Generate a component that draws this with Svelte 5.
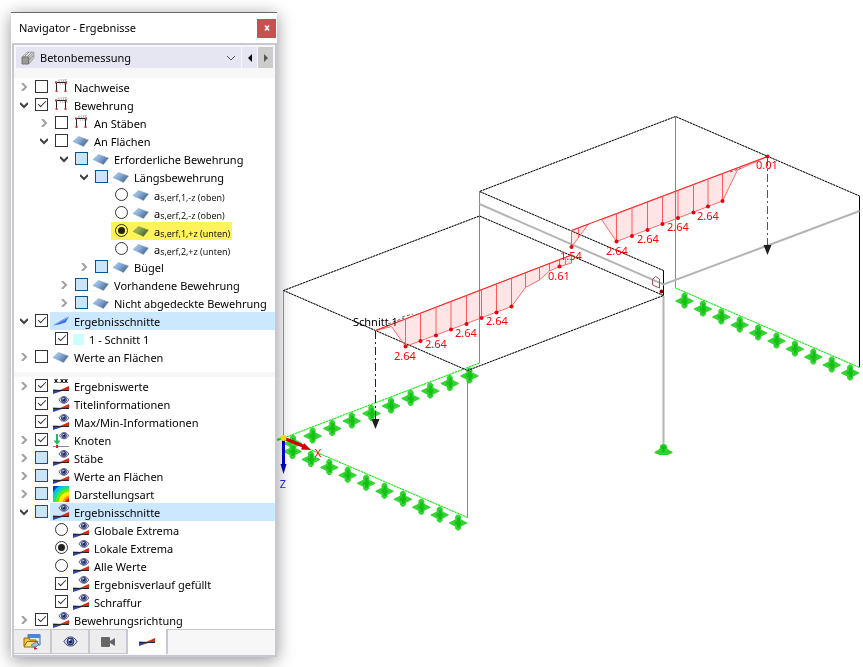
<script lang="ts">
	type Row = {
		level: number;
		text: string;
		icon: string;
		arrow?: 'open' | 'closed';
		kind?: 'checkbox' | 'radio';
		group?: string;
		checked?: boolean;
		mixed?: boolean;
		selected?: boolean;
		marked?: boolean;
		sub?: string;
	};

	const results: Row[] = [
		{ level: 0, text: 'Nachweise', icon: 'frame', arrow: 'closed' },
		{ level: 0, text: 'Bewehrung', icon: 'frame', arrow: 'open', checked: true },
		{ level: 1, text: 'An Stäben', icon: 'frame', arrow: 'closed' },
		{ level: 1, text: 'An Flächen', icon: 'surface', arrow: 'open' },
		{ level: 2, text: 'Erforderliche Bewehrung', icon: 'surface', arrow: 'open', mixed: true },
		{ level: 3, text: 'Längsbewehrung', icon: 'surface', arrow: 'open', mixed: true },
		{ level: 4, text: 'a', sub: 's,erf,1,-z (oben)', icon: 'surface', kind: 'radio', group: 'as' },
		{ level: 4, text: 'a', sub: 's,erf,2,-z (oben)', icon: 'surface', kind: 'radio', group: 'as' },
		{ level: 4, text: 'a', sub: 's,erf,1,+z (unten)', icon: 'surface', kind: 'radio', group: 'as', checked: true, marked: true },
		{ level: 4, text: 'a', sub: 's,erf,2,+z (unten)', icon: 'surface', kind: 'radio', group: 'as' },
		{ level: 3, text: 'Bügel', icon: 'surface', arrow: 'closed', mixed: true },
		{ level: 2, text: 'Vorhandene Bewehrung', icon: 'surface', arrow: 'closed', mixed: true },
		{ level: 2, text: 'Nicht abgedeckte Bewehrung', icon: 'surface', arrow: 'closed', mixed: true },
		{ level: 0, text: 'Ergebnisschnitte', icon: 'section', arrow: 'open', checked: true, selected: true },
		{ level: 1, text: '1 - Schnitt 1', icon: 'swatch', checked: true },
		{ level: 0, text: 'Werte an Flächen', icon: 'surface', arrow: 'closed' }
	];

	const display: Row[] = [
		{ level: 0, text: 'Ergebniswerte', icon: 'values', arrow: 'closed', checked: true },
		{ level: 0, text: 'Titelinformationen', icon: 'eye', checked: true },
		{ level: 0, text: 'Max/Min-Informationen', icon: 'eye', checked: true },
		{ level: 0, text: 'Knoten', icon: 'node', arrow: 'closed', checked: true },
		{ level: 0, text: 'Stäbe', icon: 'eye', arrow: 'closed', mixed: true },
		{ level: 0, text: 'Werte an Flächen', icon: 'eye', arrow: 'closed', mixed: true },
		{ level: 0, text: 'Darstellungsart', icon: 'contour', arrow: 'closed', mixed: true },
		{ level: 0, text: 'Ergebnisschnitte', icon: 'eye', arrow: 'open', mixed: true, selected: true },
		{ level: 1, text: 'Globale Extrema', icon: 'eye', kind: 'radio', group: 'extrema' },
		{ level: 1, text: 'Lokale Extrema', icon: 'eye', kind: 'radio', group: 'extrema', checked: true },
		{ level: 1, text: 'Alle Werte', icon: 'eye', kind: 'radio', group: 'extrema' },
		{ level: 1, text: 'Ergebnisverlauf gefüllt', icon: 'eye', checked: true },
		{ level: 1, text: 'Schraffur', icon: 'eye', checked: true },
		{ level: 0, text: 'Bewehrungsrichtung', icon: 'eye', arrow: 'closed', checked: true }
	];

	const steps = Array.from({ length: 10 }, (_, i) => i);
	const supports = [
		...steps.map((i) => [293 + 19.6 * i, 443 - 7.5 * i]),
		...steps.map((i) => [292.5 + 18.4 * i, 451 + 7.95 * i]),
		...steps.map((i) => [684.5 + 18.4 * i, 300.5 + 8 * i])
	];

	const edges = [
		'M283.5 290.5L479.5 216L663.5 295.5L467.5 370.5Z',
		'M663.5 270.5L479.5 191.5L675.5 116.5L859.5 196'
	];
	const greenEdges = ['M467.5 517.5L283.5 438L479.5 363', 'M675.5 288L859.5 367.5'];

	// hatch lines of the result diagrams: x, y on the section, y of the value
	const hatch = [
		[405.5, 319, 346.5], [420.5, 313, 341], [436, 307, 335.5], [451, 301.5, 329.5],
		[466.5, 295.5, 324], [481.5, 290, 318], [496.5, 284, 312.5], [511.5, 278, 306.5],
		[525.5, 273, 287.5], [539.5, 267.5, 280], [549.5, 264, 271], [559.5, 260, 266.5],
		[565.5, 257.5, 265], [571.5, 255, 263],
		[571.5, 230.5, 247], [578.5, 228, 238],
		[616.5, 213.5, 241.5], [632, 207.5, 236], [647.5, 202, 230], [662.5, 196, 224],
		[678, 190.5, 218], [693.5, 184.5, 212.5], [708, 179, 206.5], [722.5, 173.5, 201]
	];
	const dots = [
		...hatch.slice(0, 8), hatch[11], hatch[14], ...hatch.slice(16), [767.5, 156.5, 156.5]
	];
	const values: [string, number, number][] = [
		['2.64', 405, 360], ['2.64', 436, 348], ['2.64', 466, 337], ['2.64', 497, 325],
		['0.61', 559, 280], ['1.54', 571, 260], ['2.64', 617, 255], ['2.64', 648, 243],
		['2.64', 678, 231], ['2.64', 708, 220], ['0.01', 767, 169]
	];
</script>

{#snippet wedge()}
	<path d="M0 11.5L9 12V13L0 16Z" fill="#2446b8" />
	<path d="M7 12L16 8V13H7Z" fill="#d42c14" />
	<path d="M0 12.5H16" stroke="#2a2030" />
{/snippet}

{#snippet eye()}
	<path d="M0 4.5C2 1 4.500 0 6.500 0S11 1 13 4.500C11 8 9 9 6.500 9S2 8 0 4.500Z" fill="#e0e2f0" stroke="#2c2f5e" />
	<circle cx="6.500" cy="4.500" r="3.400" fill="#5b6fae" stroke="#252a60" />
	<circle cx="6.500" cy="4.500" r="1.500" fill="#111840" />
	<circle cx="5.500" cy="3" r="1" fill="#dbe6ff" />
{/snippet}

{#snippet icon(name: string)}
	{#if name === 'swatch'}
		<span class="swatch"></span>
	{:else}
		<svg class="icon" class:loose={name === 'values'} width="16" height="16" viewBox="0 0 16 16" aria-hidden="true">
			{#if name === 'frame'}
				<path d="M6 1l2 5M8 1l2 5M10 0l2 6M12 0l2 6M7 4a2 2 0 1 1 2-3M12 4a2 2 0 1 1 2-3" fill="none" stroke="#aaa" stroke-width=".7" />
				<path d="M3.500 3V12M12.500 3V12M3 3.500H13" fill="none" stroke="#222" />
				<path d="M2 2.500h2v2H2zM12 2.500h2v2h-2zM2.500 11h2v2h-2zM11.500 11h2v2h-2z" fill="#c8303c" />
			{:else if name === 'surface'}
				<path d="M0 8.500L5.500 3.500L15.500 7L10.500 13.500Z" fill="url(#surface)" stroke="#7c9cc4" stroke-width=".5" />
			{:else if name === 'section'}
				<path d="M0 12.500L8 7.500L16 3.500L12.500 9.500L6 11.500Z" fill="#3f6fe0" />
				<path d="M1 12L16 4" stroke="#8fb2f8" stroke-width=".8" />
			{:else if name === 'contour'}
				<rect width="16" height="16" fill="#0a3cc0" />
				<circle cx="17" cy="17" r="20" fill="#00c4ee" />
				<circle cx="17" cy="17" r="17" fill="#12e0a0" />
				<circle cx="17" cy="17" r="14.500" fill="#6fe800" />
				<circle cx="17" cy="17" r="11.500" fill="#ffee00" />
				<circle cx="17" cy="17" r="7.500" fill="#ff9800" />
				<circle cx="17" cy="17" r="5" fill="#e02000" />
			{:else if name === 'node'}
				<path d="M4 2V10" stroke="#27b860" stroke-width="2" />
				<path d="M0.500 8.500H7.500L4 13Z" fill="#27b860" />
				<path d="M0 14.500H16" stroke="#888" />
				<path d="M3 13h2v3H3z" fill="#e02020" />
				<g transform="translate(6.500 0.500) scale(.7)">{@render eye()}</g>
			{:else}
				{@render wedge()}
				{#if name === 'values'}
					<text x="8" y="5" text-anchor="middle" font-size="7" font-weight="700">x.xx</text>
				{:else if name === 'eye'}
					<g transform="translate(6 0.500) scale(.75)">{@render eye()}</g>
				{/if}
			{/if}
		</svg>
	{/if}
{/snippet}

{#snippet tree(rows: Row[])}
	<ul>
		{#each rows as row}
			<li style="--level: {row.level}">
				{#if row.arrow}
					<button class="toggle" class:open={row.arrow === 'open'} aria-label={row.text}>
						<svg width="8" height="8" viewBox="0 0 8 8">
							{#if row.arrow === 'open'}
								<path d="M0 2L4 6L8 2" />
							{:else}
								<path d="M2 0L6 4L2 8" />
							{/if}
						</svg>
					</button>
				{:else}
					<span class="toggle"></span>
				{/if}
				<label class:marked={row.marked}>
					<input
						type={row.kind ?? 'checkbox'}
						name={row.group}
						checked={row.checked}
						class:mixed={row.mixed}
					/>
					<span class="caption" class:selected={row.selected}>
						{@render icon(row.icon)}
						<span class="text">{row.text}{#if row.sub}<sub>{row.sub}</sub>{/if}</span>
					</span>
				</label>
			</li>
		{/each}
	</ul>
{/snippet}

<svg class="defs" width="0" height="0" aria-hidden="true">
	<linearGradient id="surface" x1="0" y1="0" x2="1" y2="0.600">
		<stop offset="0" stop-color="#b4d8f8" />
		<stop offset="0.500" stop-color="#86aad4" />
		<stop offset="1" stop-color="#47668f" />
	</linearGradient>
</svg>

<main>
	<aside>
		<header>
			<h1>Navigator - Ergebnisse</h1>
			<button class="close" aria-label="Schließen">
				<svg width="6" height="6" viewBox="0 0 6 6"><path d="M1 0.500L5 5.500M5 0.500L1 5.500" /></svg>
			</button>
		</header>

		<div class="body">
			<div class="toolbar">
				<div class="combo">
					<svg class="cube" width="14" height="14" viewBox="0 0 14 14" aria-hidden="true">
						<path d="M1 6L6 1H13L8 6Z" fill="#ddd" stroke="#999" stroke-width=".7" />
						<path d="M8 6L13 1V7L8 13Z" fill="#c4c4c4" stroke="#999" stroke-width=".7" />
						<path d="M1 6H7.500V13H1Z" fill="#999" stroke="#777" />
						<path d="M3 6l5-5M6 6l5-5M8 9l5-5" stroke="#888" stroke-width=".8" />
					</svg>
					<select aria-label="Bemessung">
						<option>Betonbemessung</option>
					</select>
					<svg class="drop" width="10" height="6" viewBox="0 0 10 6" aria-hidden="true">
						<path d="M1 1L5 5L9 1" fill="none" stroke="#555" />
					</svg>
				</div>
				<button class="step" aria-label="Zurück">
					<svg width="4" height="8" viewBox="0 0 4 8"><path d="M4 0V8L0 4Z" fill="#000" /></svg>
				</button>
				<button class="step next" aria-label="Weiter">
					<svg width="4" height="8" viewBox="0 0 4 8"><path d="M0 0V8L4 4Z" fill="#555" /></svg>
				</button>
			</div>

			<div class="results">{@render tree(results)}</div>
			{@render tree(display)}

			<nav>
				<button aria-label="Daten">
					<svg width="18" height="18" viewBox="0 0 18 18">
						<path d="M5 1.500H17V12H5Z" fill="#dbe9fa" stroke="#3869b8" />
						<path d="M5 1H17V5H5Z" fill="#4b86da" />
						<path d="M1 5H6L7 7H13V13H1Z" fill="#f3c53a" stroke="#9a6a10" />
						<path d="M4 8.500H15L12 14H1Z" fill="#ffe27a" stroke="#9a6a10" />
						<path d="M8 12L13 9L16 11L12 15Z" fill="#8fc4ee" stroke="#456" stroke-width=".6" />
						<path d="M12 13V17M11 15.500h3" stroke="#c22" />
					</svg>
				</button>
				<button aria-label="Anzeigen">
					<svg class="loose" width="13" height="9" viewBox="0 0 13 9">{@render eye()}</svg>
				</button>
				<button aria-label="Ansichten">
					<svg width="14" height="10" viewBox="0 0 14 10">
						<path d="M0 1a1 1 0 0 1 1-1H8a1 1 0 0 1 1 1V9a1 1 0 0 1-1 1H1a1 1 0 0 1-1-1ZM9 4L14 1V9L9 6Z" fill="#666" />
					</svg>
				</button>
				<button class="active" aria-label="Ergebnisse">
					<svg width="16" height="9" viewBox="0 7 16 9">{@render wedge()}</svg>
				</button>
			</nav>
		</div>
	</aside>

	<svg class="scene" viewBox="277 0 586 667" role="img" aria-label="Modell mit Ergebnisschnitt">
		<defs>
			<g id="foot">
				<path d="M-3 -5L-1 -6H1L3 -5L4 -1L9 2V3L4 5H-4L-9 3V2L-4 -1Z" fill="#2bd32b" />
				<path d="M-2 -4H2V-1H-2ZM-1 -1H1V2H-1Z" fill="#10b810" />
			</g>
			<g id="support">
				<path d="M-3 -6L-1 -8H1L3 -6V-3L5 -2L9 0V1L5 3L3 4V6L1 8H-1L-3 6V4L-5 3L-9 1V0L-5 -2L-3 -3Z" fill="#35d435" />
				<path d="M-1 -5H2V-1H3V2H2V5H-1V2H-3V-1H-1Z" fill="#14c014" />
			</g>
		</defs>

		<g fill="none" stroke="#8a8a8a">
			<path d="M283.500 290.500V438M467.500 370.500V517.500M479.500 191.500V363M675.500 116.500V288" />
			<path d="M859.500 196V367.500M663.500 270.500V295.500" stroke="#000" />
			<path d="M479.500 204L663.500 284.500L859.500 211M663.500 296V446" stroke="#b4b4b4" stroke-width="2" />
		</g>

		{#each greenEdges as d}
			<path {d} fill="none" stroke="#a0ffa0" />
			<path {d} fill="none" stroke="#00e800" stroke-dasharray="2 1" />
		{/each}
		{#each supports as [x, y]}
			<use href="#support" {x} {y} />
		{/each}
		<use href="#foot" x="663.500" y="450" />

		{#each edges as d}
			<path {d} fill="none" stroke="#aaa" />
			<path {d} fill="none" stroke="#000" stroke-dasharray="2 1" />
		{/each}

		<g fill="#f00" fill-opacity=".1" stroke="#ff6a6a">
			<path d="M375.500 330.500L391.500 326.500L405.500 346.500L511.500 306.500L525.500 287.500L539.500 280L549.500 271L559.500 266.500L571.500 263V255Z" />
			<path d="M571.500 230.500V247L588.500 224Z" />
			<path d="M601.500 219.500L616.500 241.500L722.500 201L737.500 170L767.500 156.500Z" />
		</g>
		<path d="M375.500 330.500L571.500 255M571.500 247V230.500L767.500 156.500" fill="none" stroke="#f22" />
		{#each hatch as [x, top, bottom]}
			<path d="M{x} {top}V{bottom}" stroke="#ff5a5a" />
		{/each}
		{#each dots as [x, , y]}
			<circle cx={x} cy={y} r="2" fill="#e8000c" />
		{/each}

		<g stroke="#222" stroke-dasharray="8 3 2 3">
			<path d="M375.500 331V420" />
			<path d="M767.500 158V246" stroke="#555" />
		</g>
		<path d="M371.500 419H379.500L375.500 429ZM763.500 245H771.500L767.500 255Z" fill="#1a221a" />
		<path d="M388 324L404 318M402 317L413 314M730 172L741 168" stroke="#666" stroke-dasharray="3 2" />
		<path d="M652.500 279.500L655.500 276.500L659.500 279V288L652.500 285Z" fill="none" stroke="#a05050" />
		<circle cx="661.500" cy="291.500" r="2" fill="#900" />

		<path d="M277 440L283 438" stroke="#0c0" stroke-width="2" />
		<path d="M283.500 438V465" stroke="#0000b8" stroke-width="3" />
		<path d="M280.500 464H286.500L283.500 474Z" fill="#0000b8" />
		<path d="M283.500 438L303 446" stroke="#d00000" stroke-width="3" />
		<path d="M304 443L311 450L301 449.500Z" fill="#d00000" />
		<circle cx="283.500" cy="438" r="3" fill="#e8e000" />

		<g class="values">
			{#each values as [value, x, y]}
				<text {x} {y}>{value}</text>
			{/each}
			<text x="318" y="457">X</text>
			<text class="z" x="283" y="488">Z</text>
		</g>
		<text x="353" y="326">Schnitt 1</text>
	</svg>
</main>

<style>
	:global(body) {
		margin: 0;
		background: #fff;
	}

	main {
		display: flex;
		align-items: flex-start;
		overflow: hidden;

		font: 11px/18px 'Noto Sans', 'Open Sans', sans-serif;
		color: #000;
	}

	.defs {
		position: absolute;
	}

	aside {
		flex: none;
		box-sizing: border-box;
		width: 266px;
		margin: 12px 0 10px 11px;

		border-top: 1px solid #6a6a6a;
		background: #fff;
		box-shadow: 0 3px 16px rgba(0, 0, 0, 0.42);
	}

	header {
		display: flex;
		align-items: center;
		justify-content: space-between;
		height: 30px;
		padding: 0 1px 0 8px;
	}

	h1 {
		margin: 0;
		font-size: 11px;
		font-weight: 400;
	}

	button {
		display: flex;
		align-items: center;
		justify-content: center;
		margin: 0;
		padding: 0;
		border: none;
		background: none;
	}

	.close {
		width: 19px;
		height: 19px;
		background: #c75050;
	}

	.close path {
		stroke: #fff;
		stroke-width: 1.5;
	}

	.body {
		margin-left: 1px;
		border: 2px solid #c8c8d3;
		background: #f7f7f7;
	}

	.toolbar {
		display: flex;
		gap: 1px;
		padding: 2px 2px 10px;
	}

	.combo {
		display: flex;
		flex: 1;
		align-items: center;
		gap: 5px;
		padding: 0 5px;
		background: #e6e6f2;
	}

	select {
		flex: 1;
		height: 21px;
		padding: 0;
		border: none;
		appearance: none;
		background: none;
		font: inherit;
		color: inherit;
	}

	.step {
		width: 15px;
		background: #e6e6f2;
	}

	.next {
		background: #ccc;
	}

	.results {
		padding-bottom: 6px;
		margin-bottom: 5px;
		background: #fff;
	}

	ul {
		margin: 0;
		padding: 0;
		list-style: none;
		background: #fff;
	}

	li {
		display: flex;
		align-items: center;
		height: 18px;
		padding-left: calc(6px + var(--level) * 20px);
	}

	.toggle {
		flex: none;
		width: 8px;
		height: 18px;
		margin-right: 7px;
	}

	.toggle path {
		fill: none;
		stroke: #a0a0a0;
		stroke-width: 2;
	}

	.open path {
		stroke: #404040;
	}

	label {
		display: flex;
		flex: 1;
		align-items: center;
		white-space: nowrap;
	}

	.marked {
		position: relative;
		flex: none;
	}

	.marked::after {
		content: '';
		position: absolute;
		inset: 0 -2px 0 -4px;
		background: #fff35b;
		mix-blend-mode: multiply;
	}

	input {
		display: grid;
		place-items: center;
		flex: none;
		box-sizing: border-box;
		width: 13px;
		height: 13px;
		margin: 0 2px 1px 0;

		appearance: none;
		border: 1px solid #333;
		background: #fff;
	}

	input[type='radio'] {
		border-radius: 50%;
	}

	input[type='radio']:checked::before {
		content: '';
		width: 7px;
		height: 7px;
		border-radius: 50%;
		background: #222;
	}

	input[type='checkbox']:checked::before {
		content: '';
		width: 8px;
		height: 4px;
		margin-bottom: 3px;
		border: solid #333;
		border-width: 0 0 1px 1px;
		box-sizing: border-box;
		transform: rotate(-45deg);
	}

	.mixed {
		border-color: #00559b;
		background: #cce4f7;
	}

	.caption {
		display: flex;
		flex: 1;
		align-items: center;
		gap: 5px;
		height: 18px;
		padding-left: 3px;
	}

	.selected {
		background: #cce8ff;
	}

	.icon {
		flex: none;
	}

	.loose {
		overflow: visible;
	}

	.swatch {
		width: 11px;
		height: 11px;
		background: #cff;
	}

	.text {
		padding-top: 1px;
	}

	sub {
		font-family: 'Open Sans', 'Noto Sans', sans-serif;
		font-size: 9px;
		line-height: 1;
		vertical-align: -1px;
	}

	nav {
		display: flex;
		height: 25px;
		border-top: 1px solid #c8c8d3;
	}

	nav button {
		box-sizing: border-box;
		width: 38px;
		height: 24px;
		border-right: 2px solid #c8c8d3;
		border-bottom: 1px solid #c8c8d3;
		background: #ededed;
	}

	nav .active {
		width: 40px;
		height: 25px;
		margin-top: -1px;
		border-bottom: none;
		background: #fff;
	}

	.scene {
		display: block;
		flex: 1;
		min-width: 0;
		overflow: visible;
	}

	.values {
		fill: #f00;
		text-anchor: middle;
	}

	.values .z {
		fill: #22d;
	}
</style>
